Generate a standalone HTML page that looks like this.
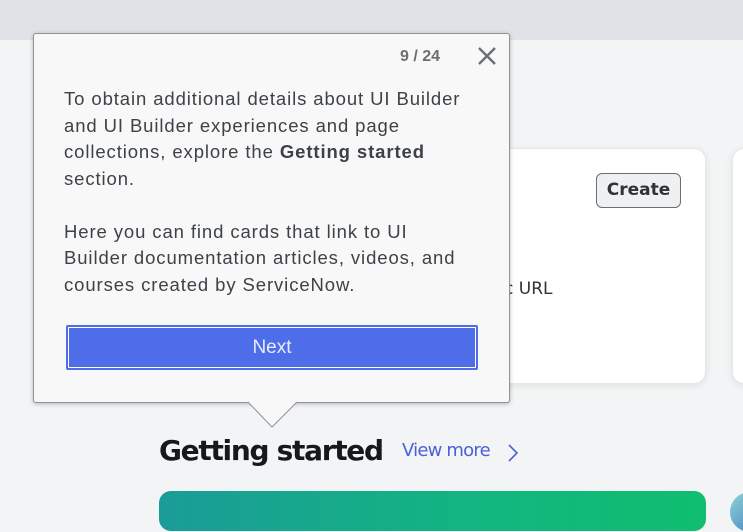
<!DOCTYPE html>
<html><head><style>
*{margin:0;padding:0;box-sizing:border-box}
body{width:743px;height:508px;overflow:hidden;background:#f3f4f5;position:relative;font-family:"Liberation Sans",sans-serif}
.top{position:absolute;left:0;top:0;width:743px;height:40px;background:#dfe2e6}
.card{position:absolute;background:#fff;border-radius:12px;box-shadow:0 2px 8px rgba(0,0,0,.08);border:1px solid #e4e6e8}
.pop{position:absolute;left:33px;top:33px;width:477px;height:370px;background:#f8f8f8;border:1px solid #8f9296;border-radius:3px;box-shadow:0 1px 4px rgba(0,0,0,.25)}
.txt{position:absolute;left:30px;top:52px;white-space:nowrap;font-size:18.5px;letter-spacing:0.9px;line-height:26.5px;color:#3c4248}
.next{position:absolute;left:32px;top:291px;width:412px;height:45px;background:#4d6de9;border:2px solid #4d6de9;box-shadow:inset 0 0 0 1px #fff;color:#e8ecff;font-size:19px;text-align:center;line-height:41px;border-radius:2px}
</style></head><body>
<div class="top"></div>
<div class="card" style="left:420px;top:148px;width:286px;height:236px"></div>
<div class="card" style="left:732px;top:148px;width:40px;height:236px"></div>
<div style="position:absolute;left:596px;top:173px;width:85px;height:35px;border:1.5px solid #6b6f73;border-radius:6px;background:#eef0f1;font:bold 17px 'DejaVu Sans',sans-serif;color:#2e3338;text-align:center;line-height:32px">Create</div>
<div style="position:absolute;left:504px;top:279px;font:17px 'DejaVu Sans',sans-serif;color:#333">c URL</div>
<div class="pop">
<div style="position:absolute;left:366px;top:14px;font-weight:bold;font-size:16px;color:#6b6f73">9 / 24</div>
<svg style="position:absolute;left:443px;top:12px" width="20" height="20" viewBox="0 0 20 20"><path d="M2 2L18 18M18 2L2 18" stroke="#6b6f73" stroke-width="2.4"/></svg>
<div class="txt">To obtain additional details about UI Builder<br>and UI Builder experiences and page<br>collections, explore the <b>Getting started</b><br>section.<br><br>Here you can find cards that link to UI<br>Builder documentation articles, videos, and<br>courses created by ServiceNow.</div>
<div class="next">Next</div>
</div>
<svg style="position:absolute;left:248px;top:401px" width="50" height="28" viewBox="0 0 50 28"><path d="M0 1L24 26L49 1" fill="#f8f8f8" stroke="#8f9296" stroke-width="1"/><rect x="1" y="0" width="47" height="1.5" fill="#f8f8f8"/></svg>
<div style="position:absolute;left:159px;top:434px;font:bold 28px 'DejaVu Sans',sans-serif;letter-spacing:-1.3px;color:#16191c">Getting started</div>
<div style="position:absolute;left:402px;top:440px;font:18px 'DejaVu Sans',sans-serif;letter-spacing:-0.8px;color:#4a61d9">View more</div>
<svg style="position:absolute;left:507px;top:443px" width="12" height="20" viewBox="0 0 12 20"><path d="M2 2L10 10L2 18" fill="none" stroke="#4a61d9" stroke-width="1.6"/></svg>
<div style="position:absolute;left:159px;top:491px;width:547px;height:40px;border-radius:12px;background:linear-gradient(90deg,#1a9c98,#12b67f 60%,#0fbe6f)"></div>
<div style="position:absolute;left:730px;top:492px;width:40px;height:40px;border-radius:50%;background:linear-gradient(135deg,#8fd3d8,#3c79c0)"></div>
</body></html>
